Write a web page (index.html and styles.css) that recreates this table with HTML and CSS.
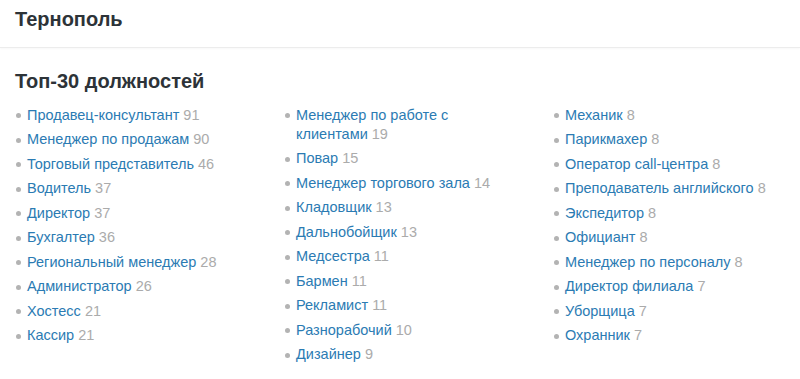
FILE: index.html
```html
<!DOCTYPE html>
<html lang="ru">
<head>
<meta charset="utf-8">
<link rel="stylesheet" href="styles.css">
</head>
<body>
<header class="top">
  <h1 class="city">Тернополь</h1>
</header>
<section class="section">
  <h2 class="title">Топ-30 должностей</h2>
  <div class="cols">
    <ul class="list">
      <li><a class="link">Продавец-консультант</a> <span class="num">91</span></li>
      <li><a class="link">Менеджер по продажам</a> <span class="num">90</span></li>
      <li><a class="link">Торговый представитель</a> <span class="num">46</span></li>
      <li><a class="link">Водитель</a> <span class="num">37</span></li>
      <li><a class="link">Директор</a> <span class="num">37</span></li>
      <li><a class="link">Бухгалтер</a> <span class="num">36</span></li>
      <li><a class="link">Региональный менеджер</a> <span class="num">28</span></li>
      <li><a class="link">Администратор</a> <span class="num">26</span></li>
      <li><a class="link">Хостесс</a> <span class="num">21</span></li>
      <li><a class="link">Кассир</a> <span class="num">21</span></li>
    </ul>
    <ul class="list">
      <li><a class="link">Менеджер по работе с клиентами</a> <span class="num">19</span></li>
      <li><a class="link">Повар</a> <span class="num">15</span></li>
      <li><a class="link">Менеджер торгового зала</a> <span class="num">14</span></li>
      <li><a class="link">Кладовщик</a> <span class="num">13</span></li>
      <li><a class="link">Дальнобойщик</a> <span class="num">13</span></li>
      <li><a class="link">Медсестра</a> <span class="num">11</span></li>
      <li><a class="link">Бармен</a> <span class="num">11</span></li>
      <li><a class="link">Рекламист</a> <span class="num">11</span></li>
      <li><a class="link">Разнорабочий</a> <span class="num">10</span></li>
      <li><a class="link">Дизайнер</a> <span class="num">9</span></li>
    </ul>
    <ul class="list">
      <li><a class="link">Механик</a> <span class="num">8</span></li>
      <li><a class="link">Парикмахер</a> <span class="num">8</span></li>
      <li><a class="link">Оператор call-центра</a> <span class="num">8</span></li>
      <li><a class="link">Преподаватель английского</a> <span class="num">8</span></li>
      <li><a class="link">Экспедитор</a> <span class="num">8</span></li>
      <li><a class="link">Официант</a> <span class="num">8</span></li>
      <li><a class="link">Менеджер по персоналу</a> <span class="num">8</span></li>
      <li><a class="link">Директор филиала</a> <span class="num">7</span></li>
      <li><a class="link">Уборщица</a> <span class="num">7</span></li>
      <li><a class="link">Охранник</a> <span class="num">7</span></li>
    </ul>
  </div>
</section>
</body>
</html>
```
FILE: styles.css
```css
* { box-sizing: border-box; }
body {
  margin: 0;
  background: #fff;
  font-family: "Liberation Sans", Arial, sans-serif;
  color: #2d3338;
}
.top {
  height: 48px;
  padding: 7px 15px 0;
  border-bottom: 1px solid #ececec;
  box-shadow: 0 1px 2px rgba(0,0,0,0.03);
}
.city {
  margin: 0;
  font-size: 20px;
  line-height: 24px;
  font-weight: bold;
}
.section {
  padding: 21px 15px 0;
}
.title {
  margin: 0 0 10px;
  font-size: 20px;
  line-height: 24px;
  font-weight: bold;
}
.cols {
  display: grid;
  grid-template-columns: repeat(3, 269px);
}
.list {
  margin: 0;
  padding: 0 40px 0 0;
  list-style: none;
}
.list li {
  position: relative;
  padding: 2.75px 0 2.75px 12px;
  font-size: 14.5px;
  line-height: 19px;
}
.list li::before {
  content: "";
  position: absolute;
  left: 1px;
  top: 10px;
  width: 5px;
  height: 5px;
  border-radius: 50%;
  background: #b3b3b3;
}
.link {
  color: #2b7bb3;
  text-decoration: none;
}
.num {
  color: #ababab;
}
```
